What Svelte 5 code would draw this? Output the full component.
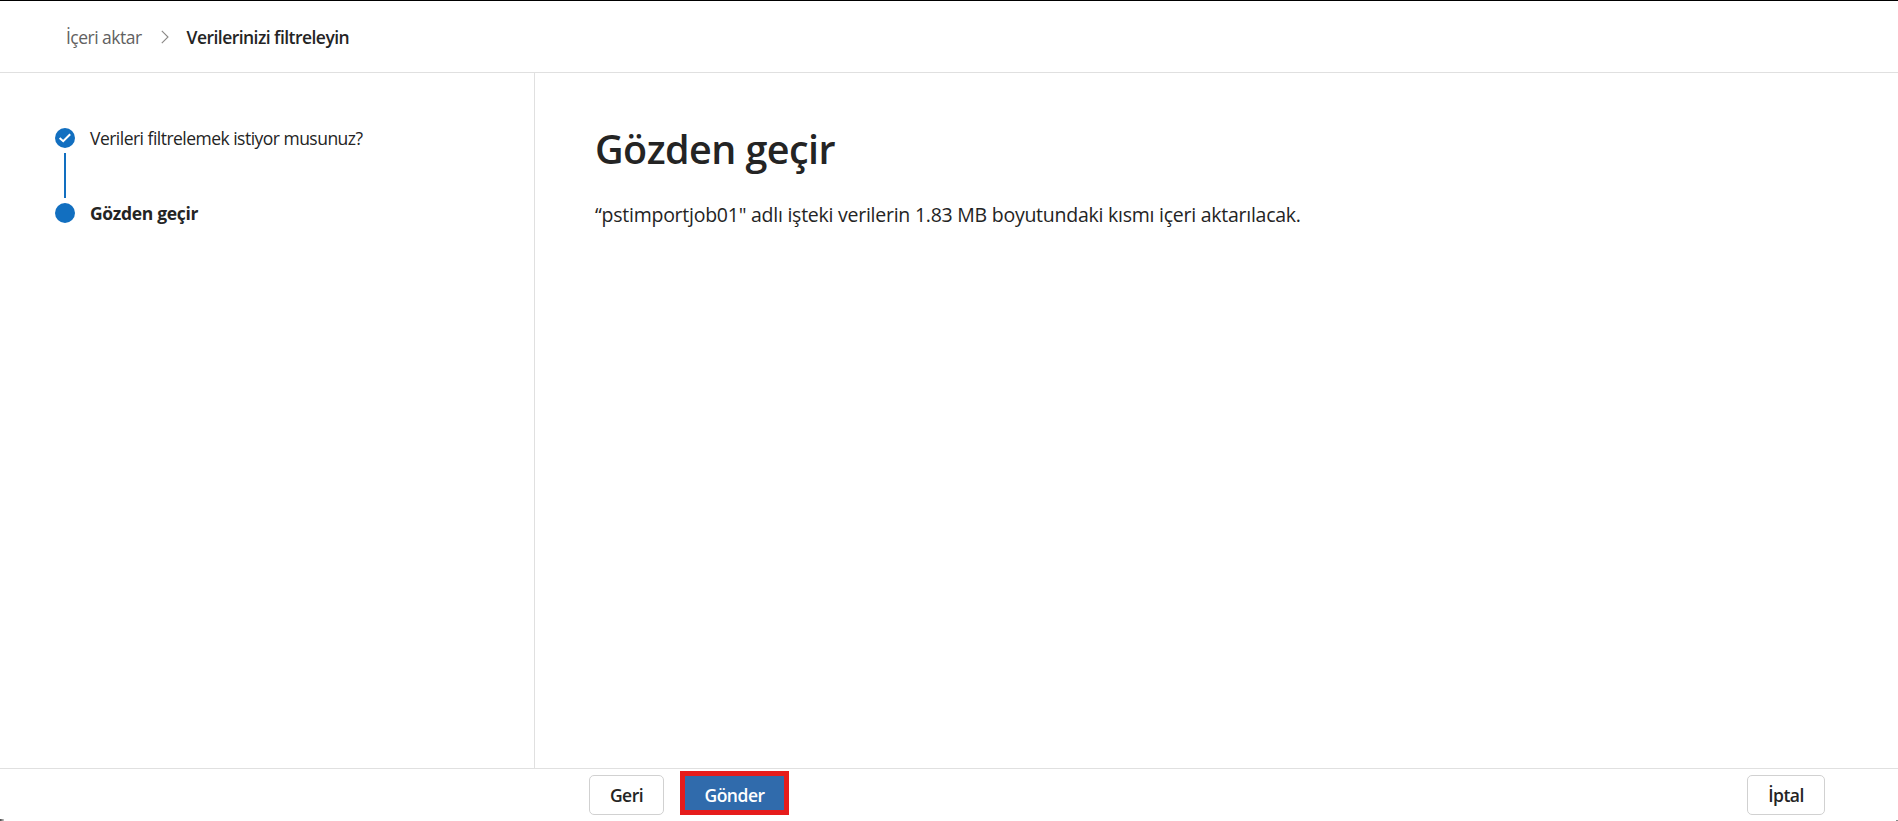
<script lang="ts">
  type Step = {
    label: string;
    done: boolean;
  }

  const steps: Step[] = [
    {label: 'Verileri filtrelemek istiyor musunuz?', done: true},
    {label: 'Gözden geçir', done: false}
  ];

  const jobName = 'pstimportjob01';
  const jobSize = '1.83 MB';
</script>

<div class="wizard">
    <header class="header">
        <nav class="breadcrumb">
            <a class="crumb" href="#import">İçeri aktar</a>
            <svg class="chevron" width="8" height="14" viewBox="0 0 8 14">
                <path d="M0.8 0.8 L7 7 L0.8 13.2" fill="none" stroke="#8a8886" stroke-width="1.1" />
            </svg>
            <span class="current">Verilerinizi filtreleyin</span>
        </nav>
    </header>

    <div class="content">
        <aside class="sidebar">
            <ol class="steps">
                {#each steps as step, i}
                    <li class="step">
                        <div class="marker">
                            <svg width="20" height="20" viewBox="0 0 20 20">
                                <circle cx="10" cy="10" r="10" fill="#126fc0" />
                                {#if step.done}
                                    <path d="M4.6 10 L8.2 13.2 L15.2 6.2" fill="none" stroke="#fff" stroke-width="2" />
                                {/if}
                            </svg>
                            {#if i < steps.length - 1}
                                <span class="line"></span>
                            {/if}
                        </div>
                        <span class="label" class:active={!step.done}>{step.label}</span>
                    </li>
                {/each}
            </ol>
        </aside>

        <main class="main">
            <h1>Gözden geçir</h1>
            <p>“{jobName}" adlı işteki verilerin {jobSize} boyutundaki kısmı içeri aktarılacak.</p>
        </main>
    </div>

    <footer class="footer">
        <button type="button" class="btn back">Geri</button>
        <button type="button" class="btn submit">Gönder</button>
        <button type="button" class="btn cancel">İptal</button>
    </footer>

    <!-- Window corners -->
    <span class="corner left"></span>
    <span class="corner right"></span>
</div>

<style>
    :global(body) {
        background-color: #fff;
    }

    .wizard {
        position: relative;
        display: flex;
        flex-direction: column;
        box-sizing: border-box;
        height: 100vh;
        overflow: hidden;
        border-top: 1px solid #000;
        color: #242424;
        font-family: "Open Sans", "Noto Sans", sans-serif;
    }

    .header {
        flex: none;
        box-sizing: border-box;
        height: 72px;
        padding-left: 66px;
        border-bottom: 1px solid #e0e0e0;
    }

    .breadcrumb {
        display: flex;
        align-items: center;
        height: 72px;
        font-size: 17.5px;
    }

    .crumb {
        color: #616161;
        letter-spacing: -0.52px;
        text-decoration: none;
    }

    .chevron {
        margin: 0 18px 0 19px;
    }

    .current {
        font-weight: 600;
        letter-spacing: -0.54px;
    }

    .content {
        display: flex;
        flex: 1;
    }

    .sidebar {
        flex: none;
        box-sizing: border-box;
        width: 535px;
        padding: 55px 0 0 55px;
        border-right: 1px solid #e0e0e0;
    }

    .steps {
        margin: 0;
        padding: 0;
        list-style: none;
    }

    .step {
        display: flex;
        gap: 15px;
    }

    .marker {
        display: flex;
        flex-direction: column;
        align-items: center;
    }

    .line {
        width: 2px;
        height: 45px;
        margin: 5px 0;
        background-color: #126fc0;
    }

    .label {
        height: 20px;
        font-size: 17.5px;
        letter-spacing: -0.52px;
        line-height: 21px;
    }

    .label.active {
        font-weight: 700;
        letter-spacing: -0.33px;
    }

    .main {
        padding: 50px 0 0 60px;
    }

    h1 {
        margin: 0;
        font-size: 39.5px;
        font-weight: 600;
        letter-spacing: -0.56px;
        line-height: 52px;
    }

    p {
        margin: 26px 0 0;
        font-size: 19.5px;
        letter-spacing: -0.25px;
        line-height: 28px;
    }

    .footer {
        display: flex;
        flex: none;
        box-sizing: border-box;
        height: 53px;
        padding: 2px 73px 0 589px;
        border-top: 1px solid #e0e0e0;
    }

    .btn {
        box-sizing: border-box;
        height: 40px;
        margin-top: 4px;
        padding: 0;
        border: 1px solid #d1d1d1;
        border-radius: 5px;
        background-color: #fff;
        color: #242424;
        font-family: inherit;
        font-size: 17.5px;
        font-weight: 600;
        letter-spacing: -0.5px;
    }

    .back {
        width: 75px;
    }

    .submit {
        width: 109px;
        height: 44px;
        margin: 0 0 0 16px;
        padding-top: 4px;
        border: 5px solid #e61c1c;
        border-radius: 0;
        background-color: #306bac;
        color: #fff;
    }

    .cancel {
        width: 78px;
        margin-left: auto;
    }

    .corner {
        position: absolute;
        bottom: 0;
        width: 4px;
        height: 2px;
        background: linear-gradient(to right, #444, #ccc);
    }

    .corner.left {
        left: 0;
    }

    .corner.right {
        right: 0;
        width: 2px;
        height: 1px;
        background: #888;
    }
</style>
